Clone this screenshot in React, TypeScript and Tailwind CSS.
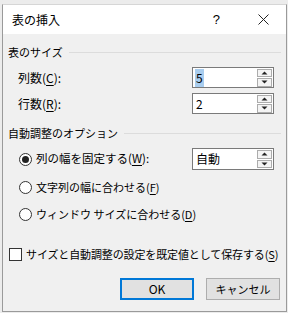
import React from "react";

function Arrow({ up }: { up?: boolean }) {
  return (
    <svg width="7" height="4" viewBox="0 0 7 4">
      {up ? <polygon points="0.5,3.5 6.5,3.5 3.5,0.5" fill="#222" /> : <polygon points="0.5,0.5 6.5,0.5 3.5,3.5" fill="#222" />}
    </svg>
  );
}

function Spin({ children, h = "h-[21px]" }: { children: React.ReactNode; h?: string }) {
  return (
    <div className={`w-[82px] ${h} border border-[#7a7a7a] bg-white flex items-center justify-between pl-[2px] pr-[1px]`}>
      <div className="flex items-center text-[12px] leading-none">{children}</div>
      <div className="flex flex-col w-[15px] h-[18px] gap-[1px]">
        <div className="flex-1 bg-[#f4f4f4] border border-[#acacac] flex items-center justify-center">
          <Arrow up />
        </div>
        <div className="flex-1 bg-[#f4f4f4] border border-[#acacac] flex items-center justify-center">
          <Arrow />
        </div>
      </div>
    </div>
  );
}

function Radio({ checked }: { checked?: boolean }) {
  return (
    <div className="w-[13px] h-[13px] rounded-full border border-[#333] bg-white flex items-center justify-center shrink-0">
      {checked && <div className="w-[7px] h-[7px] rounded-full bg-[#222]" />}
    </div>
  );
}

function U({ c }: { c: string }) {
  return <span className="underline underline-offset-2 decoration-1">{c}</span>;
}

function GroupTitle({ children }: { children: React.ReactNode }) {
  return (
    <div className="h-[16px] flex items-center">
      <span className="whitespace-nowrap">{children}</span>
      <div className="flex-1 h-px bg-[#dcdcdc] ml-[6px]" />
    </div>
  );
}

export default function App() {
  return (
    <div className="w-[288px] h-[313px] bg-[#ececec] pt-[4px] pl-[2px] font-['Noto_Sans_CJK_JP','Noto_Sans',sans-serif] text-[11px] leading-none text-black">
      <div className="w-[285px] h-[308px] border border-[#9a9a9a] border-t-[#d6d6d6] bg-[#f0f0f0] flex flex-col">
        <div className="h-[29px] bg-white flex items-center pl-[9px] pr-[17px]">
          <span className="text-[12px] flex-1">表の挿入</span>
          <span className="text-[13px] mr-[38px] font-['Liberation_Sans',sans-serif]">?</span>
          <svg width="11" height="11" viewBox="0 0 11 11">
            <path d="M0.5 0.5 L10.5 10.5 M10.5 0.5 L0.5 10.5" stroke="#222" strokeWidth="1" />
          </svg>
        </div>
        <div className="flex flex-col pl-[5px] pr-[5px] pt-[10px]">
          <GroupTitle>表のサイズ</GroupTitle>
          <div className="mt-[7px] h-[21px] flex items-center justify-between pl-[10px] pr-[7px]">
            <span className="text-[12px]">
              列数(<U c="C" />):
            </span>
            <Spin>
              <span className="bg-[#a9cdee] px-[1px] py-[3px]">5</span>
            </Spin>
          </div>
          <div className="mt-[5px] h-[21px] flex items-center justify-between pl-[10px] pr-[7px]">
            <span className="text-[12px]">
              行数(<U c="R" />):
            </span>
            <Spin>
              <span className="px-[1px]">2</span>
            </Spin>
          </div>
          <div className="mt-[11px]">
            <GroupTitle>自動調整のオプション</GroupTitle>
          </div>
          <div className="mt-[7px] h-[22px] flex items-center justify-between pl-[11px] pr-[7px]">
            <div className="flex items-center gap-[4px]">
              <Radio checked />
              <span className="text-[11.5px]">
                列の幅を固定する(<U c="W" />):
              </span>
            </div>
            <Spin h="h-[22px]">
              <span className="px-[1px]">自動</span>
            </Spin>
          </div>
          <div className="mt-[9px] h-[16px] flex items-center gap-[4px] pl-[11px]">
            <Radio />
            <span>
              文字列の幅に合わせる(<U c="F" />)
            </span>
          </div>
          <div className="mt-[11px] h-[16px] flex items-center gap-[4px] pl-[11px]">
            <Radio />
            <span>
              ウィンドウ サイズに合わせる(<U c="D" />)
            </span>
          </div>
          <div className="mt-[24px] h-[16px] flex items-center gap-[4px] pl-[1px]">
            <div className="w-[13px] h-[13px] border border-[#333] bg-white shrink-0" />
            <span className="whitespace-nowrap tracking-[-0.12px]">
              サイズと自動調整の設定を既定値として保存する(<U c="S" />)
            </span>
          </div>
          <div className="mt-[16px] h-[22px] flex justify-end gap-[12px] pr-[1px]">
            <button className="w-[74px] h-[22px] border-2 border-[#0078d7] bg-[#e1e1e1] text-[12px] leading-none">OK</button>
            <button className="w-[74px] h-[22px] border border-[#adadad] bg-[#e1e1e1] text-[11px] leading-none">キャンセル</button>
          </div>
        </div>
      </div>
    </div>
  );
}
